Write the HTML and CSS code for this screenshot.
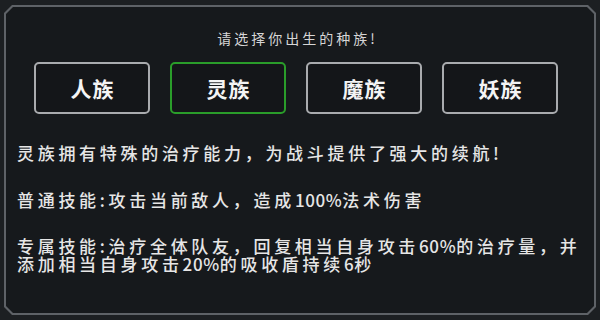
FILE: index.html
```html
<!DOCTYPE html>
<html lang="zh-CN">
<head>
<meta charset="utf-8">
<title>选择种族</title>
<link rel="stylesheet" href="styles.css">
</head>
<body>
<div class="frame">
  <div class="panel">
    <div class="head">
      <h1 class="title">请选择你出生的种族!</h1>
      <div class="races">
        <button class="race">人族</button>
        <button class="race active">灵族</button>
        <button class="race">魔族</button>
        <button class="race">妖族</button>
      </div>
    </div>
    <div class="desc">
      <p>灵族拥有特殊的治疗能力，为战斗提供了强大的续航!</p>
      <p>普通技能:攻击当前敌人，造成<span class="num">100%</span>法术伤害</p>
      <div class="para">
        <div class="line">专属技能:治疗全体队友，回复相当自身攻击<span class="num">60%</span>的治疗量，并</div>
        <div class="line">添加相当自身攻击<span class="num">20%</span>的吸收盾持续<span class="num">6</span>秒</div>
      </div>
    </div>
  </div>
</div>
</body>
</html>
```

FILE: styles.css
```css
html, body {
  margin: 0;
  padding: 0;
}
body {
  width: 600px;
  height: 320px;
  background: #1c1f22;
  padding: 5px 4px;
  box-sizing: border-box;
  font-family: "Noto Sans CJK SC", "Noto Sans", sans-serif;
  overflow: hidden;
}
.frame {
  height: 310px;
  background: #5e6267;
  padding: 2px;
  box-sizing: border-box;
  clip-path: polygon(8px 0, calc(100% - 8px) 0, 100% 8px, 100% calc(100% - 8px), calc(100% - 8px) 100%, 8px 100%, 0 calc(100% - 8px), 0 8px);
}
.panel {
  height: 100%;
  background: #16191c;
  clip-path: polygon(7px 0, calc(100% - 7px) 0, 100% 7px, 100% calc(100% - 7px), calc(100% - 7px) 100%, 7px 100%, 0 calc(100% - 7px), 0 7px);
  overflow: hidden;
}
.head {
  padding: 21px 36px 0 28px;
}
.title {
  margin: 0;
  text-align: center;
  font-size: 14px;
  line-height: 20px;
  font-weight: normal;
  letter-spacing: 3px;
  color: #d6d6d6;
  padding-left: 3px;
}
.races {
  margin-top: 14px;
  display: flex;
  justify-content: center;
  gap: 20px;
}
.race {
  width: 116px;
  height: 52px;
  box-sizing: border-box;
  border: 2px solid #a9abae;
  border-radius: 5px;
  background: #141619;
  color: #f4f4f4;
  font-family: "Noto Sans CJK SC", "Noto Sans", sans-serif;
  font-size: 21px;
  font-weight: bold;
  letter-spacing: 1px;
  padding: 0 0 0 1px;
}
.race.active {
  border-color: #2a9d2a;
}
.desc {
  margin-top: 30px;
  padding-left: 11px;
  color: #e6e6e6;
  font-size: 17px;
  line-height: 18px;
  letter-spacing: 3.7px;
  font-weight: 500;
}
.desc p,
.desc .para {
  margin: 0 0 28.5px 0;
  white-space: nowrap;
}
.line {
  height: 18px;
  overflow: visible;
}
.num {
  letter-spacing: 0.6px;
}
```
